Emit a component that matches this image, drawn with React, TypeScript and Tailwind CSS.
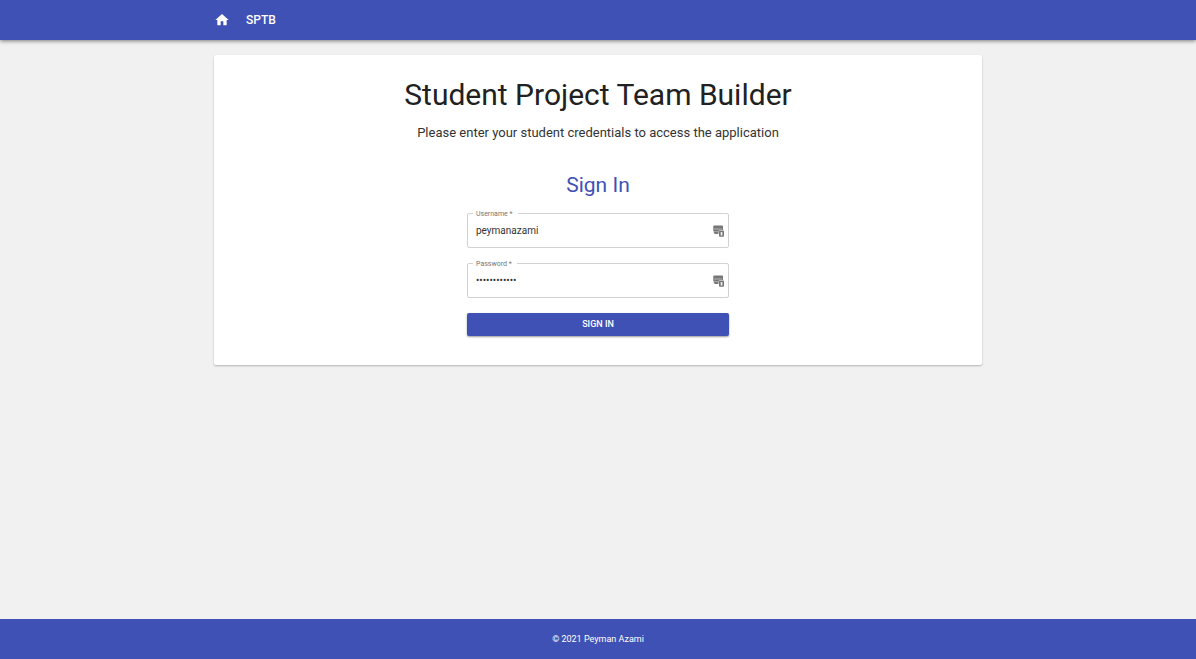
import type { ReactNode } from "react";

function HomeIcon() {
  return (
    <svg viewBox="0 0 24 24" className="size-4 fill-current" aria-hidden="true">
      <path d="M10 20v-6h4v6h5v-8h3L12 3 2 12h3v8z" />
    </svg>
  );
}

function CredentialIcon() {
  return (
    <svg viewBox="0 0 11 12" className="h-3 w-[11px]" aria-hidden="true">
      <path
        d="M1 .5h8.200a.8.8 0 0 1 .8.8V5H7.500a2 2 0 0 0-2 2v2H2.200A1.400 1.400 0 0 1 .8 7.600V6.300H.3v-5A.8.8 0 0 1 1 .5z"
        fill="#777"
      />
      <path d="M1.500 4h1.200M3.500 4h1.200M5.500 4h1.200M7.500 4h1.200" stroke="#ddd" strokeWidth="1" />
      <path d="M.8 6.600h4.800" stroke="#c4c4c4" strokeWidth=".6" />
      <rect x="6" y="5.500" width="5" height="6.200" rx=".9" fill="#777" />
      <rect x="7.700" y="7" width="1.700" height="3.600" rx=".5" fill="#eee" />
    </svg>
  );
}

type FieldProps = {
  id: string;
  label: string;
  type: string;
  value: string;
  icon: ReactNode;
};

function Field({ id, label, type, value, icon }: FieldProps) {
  return (
    <div className="relative flex h-[35px] items-center rounded-xs border border-[#d2d2d2] pr-1 pl-2">
      <label
        htmlFor={id}
        className="absolute -top-1 left-[5px] bg-white pr-[5px] pl-[3px] text-[7px] leading-[8px] text-[#757575]"
      >
        {label} *
      </label>
      <input
        id={id}
        type={type}
        defaultValue={value}
        required
        className="min-w-0 flex-1 bg-transparent text-[10px] leading-3 text-[#333] outline-none"
      />
      {icon}
    </div>
  );
}

export default function App() {
  return (
    <div className="flex min-h-screen flex-col bg-[#f1f1f1] font-[Roboto,sans-serif] text-[#212121]">
      <header className="bg-[#3f51b5] text-white shadow-[0_1px_4px_rgba(0,0,0,0.5)]">
        <nav className="mx-auto flex h-10 w-full max-w-3xl items-center gap-4">
          <a href="#home" aria-label="Home" className="flex">
            <HomeIcon />
          </a>
          <a href="#sptb" className="text-xs leading-5 font-medium">
            SPTB
          </a>
        </nav>
      </header>

      <main className="mx-auto w-full max-w-3xl flex-1 pt-[15px]">
        <section className="flex flex-col items-center rounded-xs bg-white pt-[22px] pb-[29px] shadow-[0_1px_2px_rgba(0,0,0,0.25)]">
          <h1 className="text-[30px] leading-9">Student Project Team Builder</h1>
          <p className="mt-3 text-[13px] leading-4 text-[#333]">
            Please enter your student credentials to access the application
          </p>
          <h2 className="mt-8 text-[21px] leading-6 text-[#3f51b5]">Sign In</h2>
          <form
            className="mt-4 flex w-full max-w-[262px] flex-col gap-[15px]"
            onSubmit={(event) => event.preventDefault()}
          >
            <Field id="username" label="Username" type="text" value="peymanazami" icon={<CredentialIcon />} />
            <Field id="password" label="Password" type="password" value="studentteams" icon={<CredentialIcon />} />
            <button
              type="submit"
              className="flex h-[23px] items-center justify-center rounded-xs bg-[#3f51b5] pb-0.5 text-[9px] leading-4 font-medium text-white uppercase shadow-[0_1px_2px_rgba(0,0,0,0.4)]"
            >
              Sign In
            </button>
          </form>
        </section>
      </main>

      <footer className="flex h-10 items-center justify-center bg-[#3f51b5] text-[9px] leading-4 text-white">
        <p>© 2021 Peyman Azami</p>
      </footer>
    </div>
  );
}
